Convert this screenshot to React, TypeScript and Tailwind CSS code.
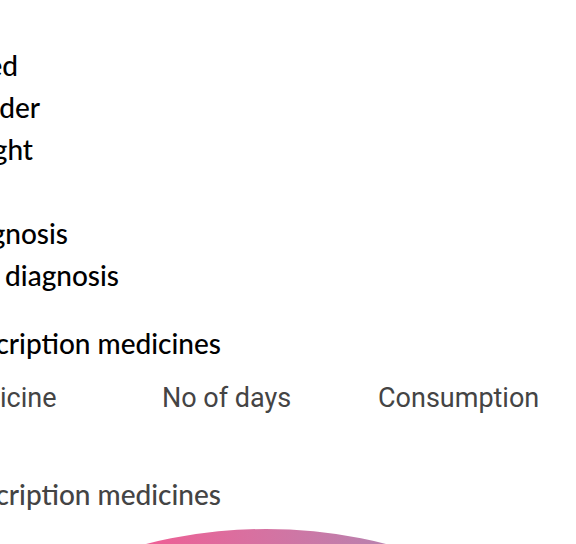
const labels = [
  { text: "ed", width: "w-[18px]" },
  { text: "der", width: "w-[40px]" },
  { text: "ght", width: "w-[33px]" },
  { text: "", width: "w-0" },
  { text: "gnosis", width: "w-[68px]" },
  { text: "diagnosis", width: "w-[119px]" },
];

export default function App() {
  return (
    <main className="flex h-screen flex-col overflow-hidden bg-white font-['Lato',sans-serif] text-[28px] leading-[42px] font-medium whitespace-nowrap text-black">
      <ul className="pt-11">
        {labels.map((label, i) => (
          <li key={i} className={`flex h-[42px] justify-end ${label.width}`}>
            {label.text}
          </li>
        ))}
      </ul>
      <h2 className="mt-[26px] flex w-[221px] justify-end">cription medicines</h2>
      <table className="mt-[13px] w-full table-fixed border-collapse font-['Roboto',sans-serif] text-[27px] text-[#444]">
        <thead>
          <tr>
            <th className="w-[162px] p-0 text-left font-normal">icine</th>
            <th className="w-[216px] p-0 text-left font-normal">No of days</th>
            <th className="p-0 text-left font-normal">Consumption</th>
          </tr>
        </thead>
      </table>
      <p className="mt-[54px] flex w-[221px] justify-end text-[#444]">cription medicines</p>
      <div className="mt-[14px] -ml-[221px] h-[974px] w-[974px] shrink-0 rounded-full bg-linear-to-r from-[#ee5f95] from-38% to-[#b981ae] to-62%" />
    </main>
  );
}
